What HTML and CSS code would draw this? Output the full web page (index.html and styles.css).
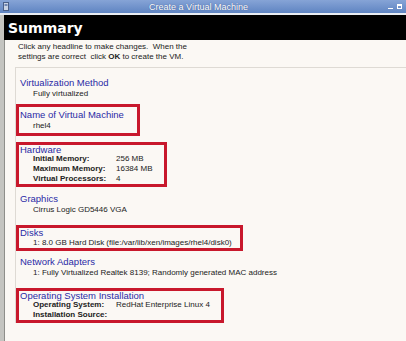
FILE: index.html
```html
<!DOCTYPE html>
<html lang="en">
<head>
  <meta charset="UTF-8">
  <title>Create a Virtual Machine</title>
  <link rel="stylesheet" href="styles.css">
</head>
<body>

<div class="window">
  <div class="titlebar">
    <svg class="tb-icon" width="6" height="9" viewBox="0 0 6 9"><rect x="0.5" y="0.5" width="5" height="8" fill="#c9d3e4" stroke="#4a5f88"/><rect x="1.5" y="2" width="3" height="2" fill="#6f86b3"/></svg>
    <span class="tb-title">Create a Virtual Machine</span>
    <span class="tb-buttons">
      <span class="tb-min"></span>
      <span class="tb-max"></span>
    </span>
  </div>

  <div class="frame">
    <div class="banner">Summary</div>

    <p class="intro">Click any headline to make changes.&nbsp; When the<br>settings are correct&nbsp; click <b>OK</b> to create the VM.</p>

    <div class="panel">
      <div class="section">
        <div class="heading">Virtualization Method</div>
        <div class="value">Fully virtualized</div>
      </div>

      <div class="section marked w-name">
        <div class="heading">Name of Virtual Machine</div>
        <div class="value">rhel4</div>
      </div>

      <div class="section marked tight w-hw">
        <div class="heading">Hardware</div>
        <div class="rows">
          <span class="label">Initial Memory:</span><span>256 MB</span>
          <span class="label">Maximum Memory:</span><span>16384 MB</span>
          <span class="label">Virtual Processors:</span><span>4</span>
        </div>
      </div>

      <div class="section after-hw">
        <div class="heading">Graphics</div>
        <div class="value">Cirrus Logic GD5446 VGA</div>
      </div>

      <div class="section marked tight w-disk">
        <div class="heading">Disks</div>
        <div class="value">1: 8.0 GB Hard Disk (file:/var/lib/xen/images/rhel4/disk0)</div>
      </div>

      <div class="section">
        <div class="heading">Network Adapters</div>
        <div class="value">1: Fully Virtualized Realtek 8139; Randomly generated MAC address</div>
      </div>

      <div class="section marked tight w-os">
        <div class="heading">Operating System Installation</div>
        <div class="rows">
          <span class="label">Operating System:</span><span>RedHat Enterprise Linux 4</span>
          <span class="label">Installation Source:</span><span></span>
        </div>
      </div>
    </div>
  </div>
</div>

</body>
</html>
```

FILE: styles.css
```css
body { margin: 0; background: #fbf8f4; font-family: "Liberation Sans", Arial, sans-serif; }
.window { width: 406px; height: 341px; overflow: hidden; background: #fbf8f4; }

.titlebar { height: 13px; display: flex; align-items: center; padding: 0 4px 0 3px; background: linear-gradient(#86a4d6, #5f84c2); border-bottom: 2px solid #e9edf3; }
.tb-icon { flex: none; }
.tb-title { flex: 1; text-align: center; color: #fff; font-size: 9px; text-shadow: 0 0 1px #2d4a80; }
.tb-buttons { display: flex; gap: 4px; align-items: center; }
.tb-min { width: 5px; height: 1px; margin-top: 4px; background: #fff; }
.tb-max { width: 5px; height: 5px; border: 1px solid #fff; border-top-width: 2px; box-sizing: border-box; }

.frame { height: 326px; border-left: 4px solid #c4c4c0; box-shadow: inset 1px 0 0 #8e8e8a; }

.banner { height: 25px; background: #000; color: #fff; font: bold 14px "DejaVu Sans", sans-serif; padding-left: 4px; line-height: 27px; }

.intro { margin: 0; padding: 2px 0 0 14px; font-size: 8px; line-height: 10px; color: #222; }

.panel { margin: 5px 0 0 11px; padding-top: 4px; border-top: 1px solid #dedad4; border-left: 1px solid #dedad4; }

.section { width: fit-content; border: 3px solid transparent; padding: 2px 8px 2px 1px; }
.section.marked { border-color: #c8182c; box-sizing: border-box; }
.section.tight { padding-top: 0; padding-bottom: 0; }
.tight .heading { line-height: 9px; }
.after-hw { margin-top: 1px; }
.w-name { width: 124px; }
.w-hw { width: 151px; margin-top: 6px; }
.w-disk { width: 227px; margin-top: 5px; padding-bottom: 2px; }
.w-os { width: 208px; margin-top: 5px; }

.heading { font-size: 9.5px; line-height: 11px; color: #2a2aa6; white-space: nowrap; }
.value { font-size: 8px; line-height: 11px; color: #222; padding-left: 13px; white-space: nowrap; }

.rows { display: grid; grid-template-columns: 83px auto; font-size: 8px; line-height: 10px; color: #222; padding-left: 13px; }
.label { font-weight: bold; }
```
